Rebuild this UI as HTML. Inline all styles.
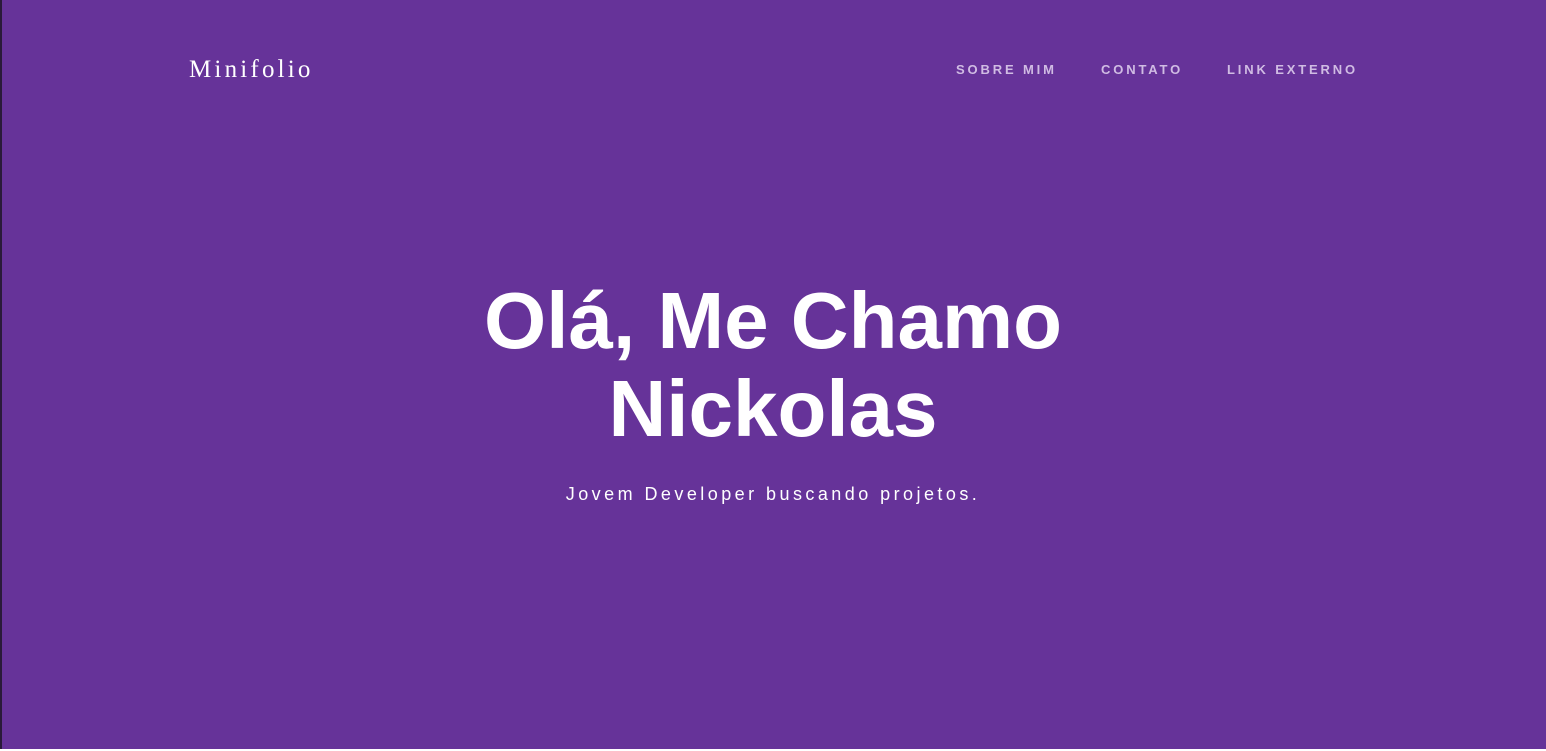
<!DOCTYPE html>
<html><head><meta charset="utf-8"><style>
html,body{margin:0;padding:0;width:1546px;height:751px;overflow:hidden;background:#fff;}
.page{position:absolute;left:2px;top:0;width:1544px;height:749px;background:#663399;}
.edge{position:absolute;left:0;top:0;width:2px;height:749px;background:#2a1a3a;}
.logo{position:absolute;left:189px;top:56px;font-family:"Liberation Serif",serif;font-size:25px;color:#fff;letter-spacing:3.2px;}
.nav{position:absolute;top:62px;font-family:"Liberation Sans",sans-serif;font-size:13px;letter-spacing:2.85px;color:#dccbec;font-weight:bold;opacity:.9}
h1{position:absolute;left:0;width:1546px;top:277px;margin:0;text-align:center;font-family:"Liberation Sans",sans-serif;font-weight:bold;font-size:80px;line-height:88px;color:#fff;}
.sub{position:absolute;left:0;width:1546px;top:484px;text-align:center;font-family:"Liberation Sans",sans-serif;font-size:18px;letter-spacing:3.45px;color:#fff;}
</style></head><body>
<div class="edge"></div><div class="page"></div>
<div class="logo">Minifolio</div>
<div class="nav" style="left:956px">SOBRE MIM</div>
<div class="nav" style="left:1101px">CONTATO</div>
<div class="nav" style="left:1227px">LINK EXTERNO</div>
<h1>Olá, Me Chamo<br>Nickolas</h1>
<div class="sub">Jovem Developer buscando projetos.</div>
</body></html>
